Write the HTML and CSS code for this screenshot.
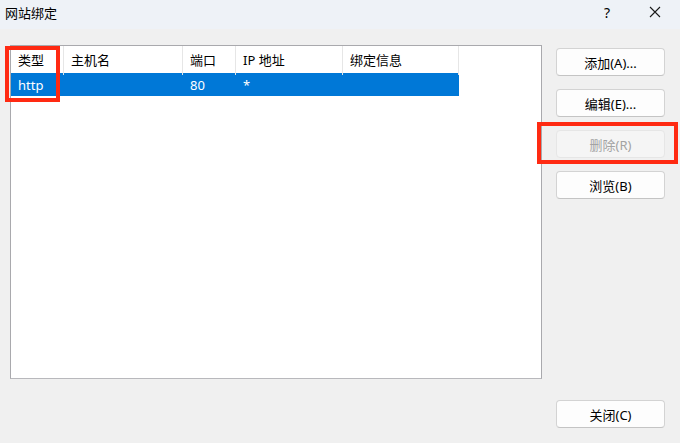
FILE: index.html
```html
<!DOCTYPE html>
<html lang="zh-CN">

<head>
    <meta charset="UTF-8" />
    <meta name="viewport" content="width=device-width, initial-scale=1.0" />
    <title>网站绑定</title>
    <link rel="stylesheet" href="styles.css">
</head>

<body>
    <div class="window">
        <div class="titlebar">
            <span class="title">网站绑定</span>
            <span class="tb-btn help">?</span>
            <span class="tb-btn close">
                <svg width="12" height="12" viewBox="0 0 12 12">
                    <path d="M1 1 L11 11 M11 1 L1 11" stroke="#1a1a1a" stroke-width="1.1" fill="none" />
                </svg>
            </span>
        </div>

        <div class="content">
            <div class="listbox">
                <div class="grid head">
                    <div class="cell">类型</div>
                    <div class="cell">主机名</div>
                    <div class="cell">端口</div>
                    <div class="cell">IP 地址</div>
                    <div class="cell">绑定信息</div>
                </div>
                <div class="grid row selected">
                    <div class="cell">http</div>
                    <div class="cell"></div>
                    <div class="cell">80</div>
                    <div class="cell">*</div>
                    <div class="cell"></div>
                </div>
            </div>

            <div class="side">
                <button class="btn">添加(A)...</button>
                <button class="btn">编辑(E)...</button>
                <button class="btn" disabled>删除(R)</button>
                <button class="btn">浏览(B)</button>
            </div>
        </div>

        <div class="footer">
            <button class="btn">关闭(C)</button>
        </div>

        <!-- annotation boxes -->
        <div class="mark mark-type"></div>
        <div class="mark mark-delete"></div>
    </div>
</body>

</html>
```

FILE: styles.css
```css
* {
    box-sizing: border-box;
}

body {
    margin: 0;
    background: #f0f0f0;
    font-family: "Noto Sans", "Noto Sans CJK SC", sans-serif;
    font-size: 13px;
    color: #000;
}

.window {
    position: relative;
    width: 680px;
    height: 443px;
    overflow: hidden;
}

.titlebar {
    height: 29px;
    background: #eef2f7;
    display: flex;
    align-items: center;
    padding-left: 5px;
}

.title {
    flex: 1;
    font-size: 13px;
    margin-top: -5px;
}

.tb-btn {
    display: flex;
    align-items: center;
    justify-content: center;
    margin-top: -5px;
}

.help {
    width: 20px;
    font-size: 14px;
    margin-right: 28px;
}

.close {
    width: 20px;
    margin-right: 15px;
}

.content {
    display: flex;
    padding: 16px 0 0 10px;
}

.listbox {
    width: 532px;
    height: 334px;
    background: #fff;
    border: 1px solid #a9a9ad;
    border-bottom-color: #b8b8bc;
}

.grid {
    display: grid;
    grid-template-columns: 53px 119px 53px 107px 116px;
    width: 448px;
}

.head {
    height: 27px;
}

.head .cell {
    border-right: 1px solid #e6e6e6;
    line-height: 29px;
}

.cell {
    padding-left: 7px;
    white-space: nowrap;
}

.row {
    height: 23px;
}

.row .cell {
    line-height: 25px;
}

.selected {
    background: #0078d7;
    color: #fff;
}

.side {
    display: flex;
    flex-direction: column;
    gap: 13px;
    margin-left: 14px;
    padding-top: 3px;
}

.btn {
    width: 109px;
    height: 28px;
    background: #fdfdfd;
    border: 1px solid #d3d3d3;
    border-bottom-color: #c4c4c4;
    border-radius: 4px;
    font-family: "Noto Sans", "Noto Sans CJK SC", sans-serif;
    font-size: 13px;
    color: #000;
    padding: 0;
}

.btn:disabled {
    background: #f5f5f5;
    border-color: #e6e6e6;
    color: #a3a3a3;
}

.footer {
    padding: 21px 0 0 556px;
}

.mark {
    position: absolute;
    border: 4px solid #ff2a12;
}

.mark-type {
    left: 5px;
    top: 46px;
    width: 55px;
    height: 56px;
}

.mark-delete {
    left: 537px;
    top: 122px;
    width: 141px;
    height: 42px;
}
```
